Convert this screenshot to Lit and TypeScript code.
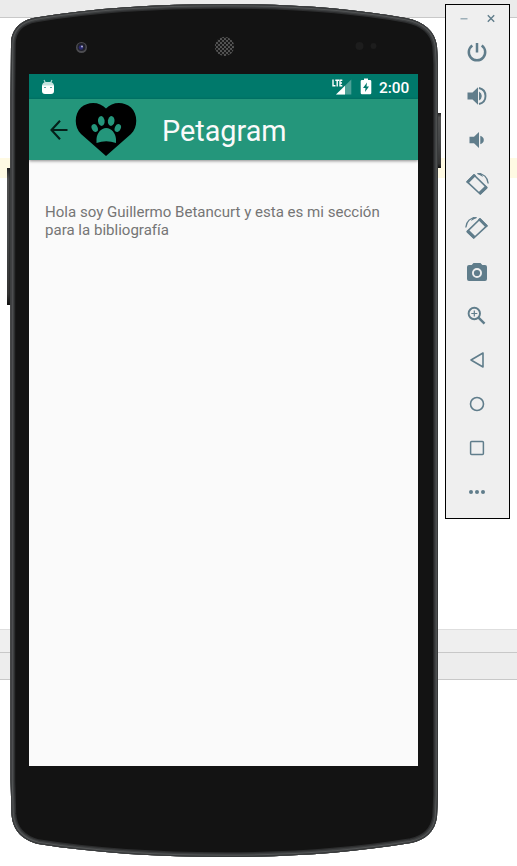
import { LitElement, html, svg, css } from "lit";
import { customElement } from "lit/decorators.js";

@customElement("phone-screen")
class PhoneScreen extends LitElement {
  static styles = css`
    :host { display: flex; flex-direction: column; width: 389px; height: 692px; background: #fafafa; font-family: Roboto, sans-serif; overflow: hidden; }
    .status { box-sizing: border-box; height: 25px; flex: none; background: #00796b; color: #fff; display: flex; align-items: center; padding: 0 9px 0 12px; }
    .status svg { display: block; flex: none; }
    .signal { margin-left: auto; margin-right: 8px; }
    .battery { margin-right: 7px; }
    .clock { font-size: 15.4px; line-height: 24px; font-weight: 500; width: 30px; margin-top: 2px; white-space: nowrap; }
    .bar { box-sizing: border-box; height: 61px; flex: none; background: #24967b; display: flex; align-items: center; padding-left: 20px; box-shadow: 0 1px 3px rgba(0,0,0,.45); }
    .heart { margin-left: 6px; margin-bottom: 1px; }
    .title { color: #fafafa; font-size: 28.800px; line-height: 40px; margin: 3px 0 0 25px; font-weight: 400; }
    .bio { margin: 44px 0 0 16px; font-size: 15.060px; line-height: 17.5px; color: #757575; white-space: nowrap; }
  `;
  render() {
    return html`
      <div class="status">
        <svg width="14" height="16" viewBox="0 0 14 16">
          <path d="M3 1L4.500 4M11 1L9.500 4" stroke="#b5dcd7" stroke-width="1.1"/>
          <path d="M1 7C1 4.500 3 3 5 3H9C11 3 13 4.500 13 7Z" fill="#c4e4df"/>
          <path d="M1 6.500H13V12Q13 15 10 15H4Q1 15 1 12Z" fill="#fff"/>
          <path d="M3 8.500H5M9 8.500H11" stroke="#5ca89f" stroke-width="1.2"/>
        </svg>
        <svg class="signal" width="20" height="16" viewBox="0 0 20 16">
          <path d="M19.300.5V15.500H4Z" fill="#4da197"/>
          <path d="M13 6.800V15.500H4Z" fill="#fff"/>
          <path d="M1 .5V6.800H3.500M3.300 1.200H7M5.200 1.200V7.500M10.300 1.200H8V6.800H10.300M8 4H10" fill="none" stroke="#fff" stroke-width="1.4"/>
        </svg>
        <svg class="battery" width="12" height="17" viewBox="0 0 12 17">
          <path d="M4 .5H8V2H10Q11.300 2 11.300 3.200V15Q11.300 16.300 10 16.300H2Q.7 16.300.7 15V3.200Q.7 2 2 2H4Z" fill="#fff"/>
          <path d="M7 4.500L3 10H5.500L5 14L9 8.500H6.500Z" fill="#00796b"/>
        </svg>
        <span class="clock">2:00</span>
      </div>
      <header class="bar">
        <svg width="20" height="22" viewBox="0 0 20 22">
          <path d="M18.500 11H3M11 1.800L2.500 11L11 20.200" fill="none" stroke="#05201a" stroke-width="2.100"/>
        </svg>
        <svg class="heart" width="62" height="55" viewBox="0 0 62 55">
          <path d="M31 54L6 32C-1 25.500-1 12 6 5.500C13-1 25-.5 31 6.500C37-.5 49-1 56 5.500C63 12 63 25.500 56 32Z"/>
          <g fill="#24967b">
            <ellipse cx="26.300" cy="19" rx="3.300" ry="4.900" transform="rotate(-8 26.300 19)"/>
            <ellipse cx="36.200" cy="19" rx="3.300" ry="4.900" transform="rotate(8 36.200 19)"/>
            <ellipse cx="19.700" cy="26" rx="3" ry="4.100" transform="rotate(-22 19.700 26)"/>
            <ellipse cx="42.800" cy="26" rx="3" ry="4.100" transform="rotate(22 42.800 26)"/>
            <path d="M31.200 26C36.500 26 40.500 31 41 37V41Q31.200 37.500 21.500 41V37C22 31 26 26 31.200 26Z"/>
          </g>
        </svg>
        <h1 class="title">Petagram</h1>
      </header>
      <p class="bio">Hola soy Guillermo Betancurt y esta es mi sección<br>para la bibliografía</p>
    `;
  }
}

const rotateGlyph = svg`
  <path d="M2.200 9.800L9 3L21.700 15.400L15.200 22Z" fill="none" stroke="currentColor" stroke-width="1.600" stroke-linejoin="round"/>
  <path d="M1.300 9.500L8.500 2.300Q9.200 1.700 10 2.500L11 3.800L3.300 11.500L1.500 10.500ZM13.300 20.600L20.500 13.500L22.500 15.500Q22.800 16 22 16.700L15.500 22.800Z"/>
  <path d="M12.500 1.700Q22 1.800 23.200 11.500" fill="none" stroke="currentColor" stroke-width="1.300"/>
  <path d="M12 1.500L16 1L18 5Z"/>`;

const glyphs = [
  svg`<path d="M12 3V12.500M7.300 5.400A8.200 8.200 0 1 0 16.700 5.400" fill="none" stroke="currentColor" stroke-width="2.500"/>`,
  svg`<path d="M2.500 8.500H7.500L13 3.300V20.700L7.500 15.500H2.500ZM14 7.500Q16.800 9 16.800 12T14 16.500Z"/><path d="M14 4Q20.500 5.500 20.500 12T14 20" fill="none" stroke="currentColor" stroke-width="1.900"/>`,
  svg`<path d="M4.500 8.800H9L14 4V20L9 15.200H4.500ZM15.300 7.800Q18.800 9 18.800 12T15.300 16.200Z"/>`,
  rotateGlyph,
  svg`<g transform="matrix(-1 0 0 1 24 0)">${rotateGlyph}</g>`,
  svg`<path fill-rule="evenodd" d="M8.500 3H15.500L17.300 5H20Q22 5 22 7V19Q22 21 20 21H4Q2 21 2 19V7Q2 5 4 5H6.700ZM12 8A5 5 0 1 0 12 18A5 5 0 1 0 12 8Z"/><circle cx="12" cy="13" r="3.100"/>`,
  svg`<g fill="none" stroke="currentColor"><circle cx="9.300" cy="9.500" r="5.700" stroke-width="1.900"/><path d="M13.500 13.700L19.500 19.700" stroke-width="2.500"/><path d="M6.300 9.500H12.300M9.300 6.500V12.500" stroke-width="1.200"/></g>`,
  svg`<path d="M18 5V19L6 12Z" fill="none" stroke="currentColor" stroke-width="1.600" stroke-linejoin="round"/>`,
  svg`<circle cx="12" cy="12" r="6.500" fill="none" stroke="currentColor" stroke-width="1.600"/>`,
  svg`<rect x="5.600" y="5.600" width="12.800" height="12.800" rx="1" fill="none" stroke="currentColor" stroke-width="1.500"/>`,
  svg`<circle cx="6" cy="12" r="2"/><circle cx="12" cy="12" r="2"/><circle cx="18" cy="12" r="2"/>`,
];

@customElement("emulator-tools")
class EmulatorTools extends LitElement {
  static styles = css`
    :host { box-sizing: border-box; display: flex; flex-direction: column; align-items: center; width: 65px; height: 515px; border: 1px solid #000; background: #efefef; color: #607d8b; }
    svg { display: block; fill: currentColor; }
    .window { display: flex; gap: 17px; height: 11px; margin: 8px 0 16px; }
    .tools { display: flex; flex-direction: column; gap: 20px; margin-right: 1px; }
  `;
  render() {
    return html`
      <div class="window">
        <svg width="10" height="11" viewBox="0 0 10 11"><path d="M1.500 5H8.500V6.500H1.500Z" fill="#9dafb8"/></svg>
        <svg width="10" height="11" viewBox="0 0 10 11"><path d="M1.800 2.300L8.200 8.700M8.200 2.300L1.800 8.700" stroke="currentColor" stroke-width="1.400"/></svg>
      </div>
      <div class="tools">${glyphs.map((g) => html`<svg width="24" height="24" viewBox="0 0 24 24">${g}</svg>`)}</div>
    `;
  }
}

const outline =
  "M11 44C11 29 21 20 36 17.500C92 8 158 4 225 4C292 4 350 8 406 18C424 21.500 435 31 437 46L438 64V795L437 817C435 832 425 840 411 843C350 853 290 857 225 857C160 857 95 853 38 844C23 840 12.500 831 11.500 814L10.500 780V98Z";

@customElement("app-root")
class AppRoot extends LitElement {
  static styles = css`
    :host { display: block; position: relative; width: 517px; height: 866px; overflow: hidden; background: #fff; }
    .backdrop { display: flex; flex-direction: column; height: 100%; }
    .top { height: 17px; background: #ebebeb; border-bottom: 1px solid #c8c8c8; }
    .highlight { height: 20px; margin-top: 140px; background: #fffae3; }
    .pane { height: 22px; margin-top: 451px; background: #efefef; border-top: 1px solid #dedede; border-bottom: 1px solid #c8c8c8; }
    .footer { height: 26px; background: #ededed; border-bottom: 1px solid #c8c8c8; }
    .shell { position: absolute; left: 0; top: 0; }
    .screen { position: absolute; left: 29px; top: 74px; }
    .tools { position: absolute; left: 445px; top: 4px; }
  `;
  render() {
    return html`
      <div class="backdrop">
        <div class="top"></div>
        <div class="highlight"></div>
        <div class="pane"></div>
        <div class="footer"></div>
      </div>
      <svg class="shell" width="445" height="866" viewBox="0 0 445 866">
        <defs>
          <clipPath id="body"><path d=${outline} /></clipPath>
          <pattern id="mesh" width="4" height="4" patternUnits="userSpaceOnUse">
            <rect width="4" height="4" fill="#555"/>
            <circle cx="1" cy="1" r="1.150" fill="#161616"/><circle cx="3" cy="3" r="1.150" fill="#161616"/>
          </pattern>
          <linearGradient id="key" x1="0" y1="0" x2="0" y2="1">
            <stop offset="0" stop-color="#222"/><stop offset=".08" stop-color="#505050"/><stop offset=".5" stop-color="#454748"/><stop offset=".92" stop-color="#333"/><stop offset="1" stop-color="#111"/>
          </linearGradient>
        </defs>
        <rect x="7" y="168" width="5" height="137" fill="url(#key)"/>
        <rect x="9.500" y="169" width="1.500" height="135" fill="#222"/>
        <rect x="437" y="113" width="4" height="55" fill="url(#key)"/>
        <g clip-path="url(#body)">
          <path d=${outline} fill="#131313"/>
          <path d=${outline} fill="none" stroke="#2c2d2e" stroke-width="9.500"/>
          <path d=${outline} fill="none" stroke="#3d3f40" stroke-width="7"/>
          <path d=${outline} fill="none" stroke="#535556" stroke-width="4.500"/>
          <path d=${outline} fill="none" stroke="#383a3b" stroke-width="2.400"/>
        </g>
        <circle cx="81.500" cy="47.500" r="5.500" fill="#4c4c50"/>
        <circle cx="81.500" cy="47" r="4" fill="#20202a"/>
        <circle cx="81" cy="47.500" r="2.300" fill="#292970"/>
        <circle cx="82" cy="46.500" r="1" fill="#b4b4d8"/>
        <circle cx="224.500" cy="46.500" r="9.700" fill="url(#mesh)"/>
        <circle cx="359.500" cy="46" r="4" fill="#1d1d1d"/>
        <circle cx="373.500" cy="46" r="3" fill="#1d1d1d"/>
      </svg>
      <phone-screen class="screen"></phone-screen>
      <emulator-tools class="tools"></emulator-tools>
    `;
  }
}
